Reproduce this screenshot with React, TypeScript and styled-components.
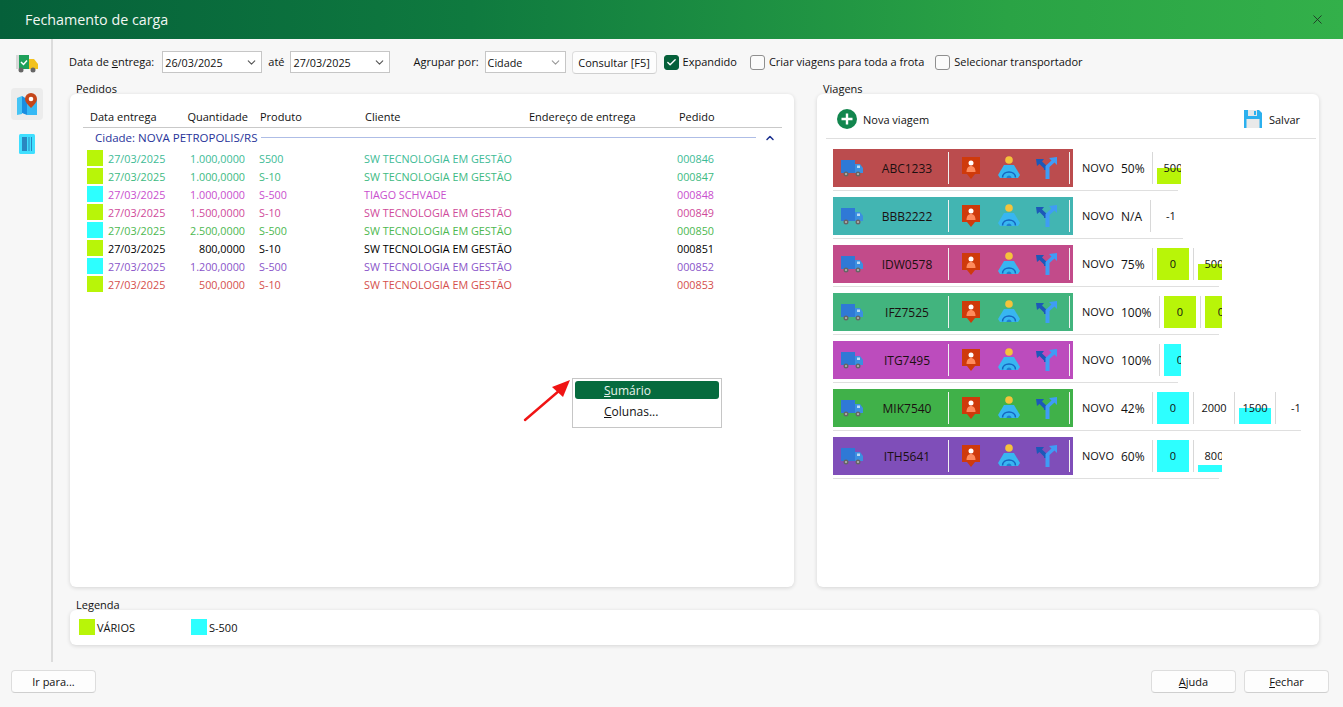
import React from 'react';
import styled, { createGlobalStyle } from 'styled-components';
import { X, ChevronDown, ChevronUp, Check } from 'lucide-react';

const Global = createGlobalStyle`
  html, body { margin: 0; padding: 0; background: #f7f7f7; }
  body { font-family: "Open Sans", "Noto Sans", "Liberation Sans", sans-serif; font-size: 11px; color: #111; }
  * { box-sizing: border-box; }
`;

const Page = styled.div`
  position: relative;
  width: 1343px;
  height: 707px;
  display: flex;
  flex-direction: column;
  overflow: hidden;
  background: #f7f7f7;
`;

const TitleBar = styled.div`
  height: 39px;
  flex: none;
  display: flex;
  align-items: center;
  justify-content: space-between;
  padding: 0 18px 0 25px;
  color: #f2f7f3;
  font-size: 14.3px;
  background: linear-gradient(90deg, #05603a 0%, #0f7a3f 35%, #2aa345 75%, #33b04a 100%);
`;

const Body = styled.div`
  flex: none;
  height: 623px;
  display: flex;
`;

const Sidebar = styled.div`
  width: 53px;
  flex: none;
  border-right: 2px solid #dcdcdc;
  display: flex;
  flex-direction: column;
  align-items: flex-start;
  padding: 9px 0 0 11px;
  gap: 8px;
`;

const SideButton = styled.div<{ $active?: boolean }>`
  width: 32px;
  height: 32px;
  border-radius: 4px;
  display: flex;
  align-items: center;
  justify-content: center;
  background: ${(p) => (p.$active ? '#ececec' : 'transparent')};
`;

const Main = styled.div`
  flex: 1;
  padding: 12px 24px 0 16px;
  display: flex;
  flex-direction: column;
`;

const Toolbar = styled.div`
  height: 22px;
  display: flex;
  align-items: center;
`;

const Label = styled.span<{ $left?: number }>`
  margin-left: ${(p) => p.$left ?? 0}px;
  padding-bottom: 1px;
  white-space: nowrap;
`;

const Select = styled.div<{ $width: number; $left?: number }>`
  width: ${(p) => p.$width}px;
  height: 22px;
  margin-left: ${(p) => p.$left ?? 0}px;
  border: 1px solid #c6c6c6;
  background: #fff;
  display: flex;
  align-items: center;
  justify-content: space-between;
  padding: 0 3px 0 2px;
  font-size: 10.8px;
`;

const Button = styled.div<{ $width: number; $left?: number; $height?: number }>`
  width: ${(p) => p.$width}px;
  height: ${(p) => p.$height ?? 23}px;
  margin-left: ${(p) => p.$left ?? 0}px;
  border: 1px solid #dddddd;
  border-bottom-color: #cfcfcf;
  border-radius: 4px;
  background: #fdfdfd;
  display: flex;
  align-items: center;
  justify-content: center;
`;

const CheckBox = styled.div<{ $checked?: boolean; $left: number }>`
  width: 15px;
  height: 15px;
  margin-left: ${(p) => p.$left}px;
  margin-right: 4px;
  border-radius: 3px;
  border: 1px solid ${(p) => (p.$checked ? '#05603a' : '#8f8f8f')};
  background: ${(p) => (p.$checked ? '#05603a' : '#fbfbfb')};
  display: flex;
  align-items: center;
  justify-content: center;
  color: #fff;
`;

const Panels = styled.div`
  display: grid;
  grid-template-columns: 724px 502px;
  column-gap: 23px;
  margin: 9px 0 0 1px;
`;

const PanelTitle = styled.div`
  height: 12px;
  line-height: 14px;
  padding-left: 6px;
  position: relative;
  z-index: 1;
`;

const Card = styled.div<{ $height: number }>`
  height: ${(p) => p.$height}px;
  background: #fff;
  border-radius: 6px;
  box-shadow: 0 1px 4px rgba(0, 0, 0, 0.14);
`;

const OrdersCard = styled(Card)`
  padding: 0 12px 0 13px;
`;

const TableHead = styled.div`
  height: 34px;
  border-bottom: 1px solid #c9c9c9;
  display: grid;
  grid-template-columns: 94px 64px 117px 164px 150px 1fr;
  align-items: center;
  padding: 12px 0 0 7px;
`;

const HeadCell = styled.span<{ $right?: boolean; $left?: number }>`
  text-align: ${(p) => (p.$right ? 'right' : 'left')};
  padding-left: ${(p) => p.$left ?? 0}px;
  white-space: nowrap;
`;

const GroupRow = styled.div`
  height: 21px;
  display: flex;
  align-items: center;
  padding: 0 0 2px 12px;
  color: #28349a;
  font-size: 11.5px;
`;

const GroupLine = styled.div`
  flex: 1;
  height: 1px;
  margin: 0 8px 0 4px;
  background: #aebde6;
`;

const OrderRow = styled.div<{ $color: string }>`
  height: 18px;
  display: grid;
  grid-template-columns: 16px 84px 58px 119px 164px 149px 1fr;
  align-items: center;
  padding-left: 4px;
  font-size: 10.8px;
  color: ${(p) => p.$color};
`;

const Swatch = styled.div<{ $color: string }>`
  width: 16px;
  height: 16px;
  background: ${(p) => p.$color};
`;

const OrderCell = styled.span<{ $right?: boolean; $left?: number }>`
  text-align: ${(p) => (p.$right ? 'right' : 'left')};
  padding-left: ${(p) => p.$left ?? 0}px;
  white-space: nowrap;
`;

const TripsTop = styled.div`
  height: 45px;
  margin: 0 3px 0 9px;
  border-bottom: 1px solid #dfdfdf;
  display: flex;
  align-items: center;
  justify-content: space-between;
  padding: 6px 16px 0 11px;
`;

const TopAction = styled.div<{ $gap: number }>`
  display: flex;
  align-items: center;
  gap: ${(p) => p.$gap}px;
`;

const TripList = styled.div`
  display: flex;
  flex-direction: column;
  gap: 6px;
  padding: 10px 0 0 16px;
`;

const TripRow = styled.div<{ $line: number }>`
  width: ${(p) => p.$line}px;
  height: 42px;
  border-bottom: 1px solid #dfdfdf;
  display: flex;
  align-items: flex-start;
  white-space: nowrap;
`;

const TripBar = styled.div<{ $color: string }>`
  width: 240px;
  height: 38px;
  flex: none;
  background: ${(p) => p.$color};
  display: flex;
  align-items: center;
  padding-left: 8px;
`;

const Plate = styled.span`
  width: 83px;
  text-align: center;
  margin-left: 2px;
  padding-left: 1px;
  font-size: 12px;
  color: #1b1010;
`;

const BarDivider = styled.div<{ $left: number }>`
  width: 1px;
  height: 32px;
  margin-left: ${(p) => p.$left}px;
  background: #f1f1f1;
`;

const BarIcon = styled.div<{ $left: number }>`
  width: 22px;
  height: 24px;
  margin-left: ${(p) => p.$left}px;
  display: flex;
  align-items: center;
  justify-content: center;
`;

const Status = styled.div`
  height: 38px;
  margin-left: 9px;
  width: 34px;
  flex: none;
  display: flex;
  align-items: center;
  padding-bottom: 1px;
`;

const Percent = styled.div<{ $width: number }>`
  height: 38px;
  width: ${(p) => p.$width}px;
  margin-left: 5px;
  flex: none;
  font-size: 12px;
  display: flex;
  align-items: center;
`;

const Cells = styled.div`
  display: flex;
  height: 38px;
  align-items: center;
`;

const CellSep = styled.div`
  width: 1px;
  height: 32px;
  flex: none;
  background: #d8d8d8;
  margin-right: 4px;
`;

const Cell = styled.div<{ $width: number }>`
  position: relative;
  width: ${(p) => p.$width}px;
  height: 32px;
  flex: none;
  margin-right: 4px;
  overflow: hidden;
  font-size: 11px;
`;

const CellFill = styled.div<{ $color: string; $height: number }>`
  position: absolute;
  left: 0;
  right: 0;
  bottom: 0;
  height: ${(p) => p.$height}px;
  background: ${(p) => p.$color};
`;

const CellText = styled.span`
  position: absolute;
  left: 0;
  top: 8px;
  width: 32px;
  text-align: center;
  line-height: 16px;
`;

const LegendSection = styled.div`
  margin: 11px 0 0 1px;
`;

const LegendCard = styled(Card)`
  display: flex;
  align-items: center;
  padding: 0 0 1px 9px;
`;

const LegendItem = styled.div<{ $width: number }>`
  width: ${(p) => p.$width}px;
  display: flex;
  align-items: center;
  gap: 2px;
`;

const Footer = styled.div`
  flex: 1;
  display: flex;
  align-items: flex-start;
  justify-content: space-between;
  padding: 8px 14px 0 11px;
`;

const FooterRight = styled.div`
  display: flex;
  gap: 8px;
`;

const ContextMenu = styled.div`
  position: absolute;
  left: 572px;
  top: 378px;
  width: 150px;
  height: 50px;
  background: #fff;
  border: 1px solid #c6c6c6;
  padding: 2px;
  display: flex;
  flex-direction: column;
`;

const MenuItem = styled.div<{ $active?: boolean }>`
  height: 18px;
  margin-bottom: 3px;
  border-radius: 3px;
  display: flex;
  align-items: center;
  padding-left: 29px;
  font-size: 12px;
  color: ${(p) => (p.$active ? '#e8f3ec' : '#111')};
  background: ${(p) => (p.$active ? '#066b3e' : 'transparent')};
`;

const Arrow = styled.svg`
  position: absolute;
  left: 520px;
  top: 378px;
`;

const LIME = '#b8f508';
const CYAN = '#2dffff';

const TruckIcon = () => (
  <svg width="22" height="20" viewBox="0 0 22 20">
    <rect x="0" y="2" width="14" height="13" fill="#2f79d6" />
    <path d="M14 6h5l3 4v5h-8z" fill="#3b8fe0" />
    <rect x="16" y="7.500" width="3" height="2.500" fill="#bcdcf5" />
    <circle cx="5" cy="16" r="2.500" fill="#666" />
    <circle cx="17" cy="16" r="2.500" fill="#666" />
    <circle cx="5" cy="16" r="1" fill="#bbb" />
    <circle cx="17" cy="16" r="1" fill="#bbb" />
  </svg>
);

const DriverIcon = () => (
  <svg width="18" height="22" viewBox="0 0 18 22">
    <path d="M0 0h18v17h-5l-4 5-4-5H0z" fill="#cf3a0b" />
    <circle cx="9" cy="6" r="2.500" fill="#fff" />
    <path d="M4.500 15c0-4 2-6 4.500-6s4.500 2 4.500 6z" fill="#ff8a5c" />
  </svg>
);

const PersonIcon = () => (
  <svg width="22" height="24" viewBox="0 0 22 24">
    <circle cx="11" cy="4" r="3.800" fill="#f5c33b" />
    <path d="M6 9h10l6 10-2 3H2l-2-3z" fill="#38b6f1" />
    <path d="M4.500 21.500c0-7.500 13-7.500 13 0" stroke="#1565c0" strokeWidth="1.500" fill="none" />
    <path d="M8.500 22c0-3.500 5-3.500 5 0z" fill="#1f7fd0" />
  </svg>
);

const RouteIcon = () => (
  <svg width="22" height="22" viewBox="0 0 22 22">
    <path d="M0 2h8L6 4.500l6 5.500v3H8v-1.500L3.500 7 1 9z" fill="#1c58b8" />
    <path d="M21 0v8l-2.500-2.500L13.500 10v12h-4V9l6-5.500L13 1z" fill="#3f9cf5" />
  </svg>
);

const SideTruck = () => (
  <svg width="22" height="20" viewBox="0 0 22 20">
    <rect x="0" y="1" width="3" height="14" fill="#d8d8d8" />
    <rect x="3" y="1" width="10" height="14" fill="#1ea05a" />
    <path d="M5 8l2.500 2.500L11 6.500" stroke="#fff" strokeWidth="1.500" fill="none" />
    <path d="M13 5h5l4 5v5h-9z" fill="#f3c21f" />
    <circle cx="5" cy="16" r="2.500" fill="#666" />
    <circle cx="17" cy="16" r="2.500" fill="#666" />
  </svg>
);

const SideMap = () => (
  <svg width="22" height="24" viewBox="0 0 22 24">
    <path d="M1 6l5-2v18l-5 1z" fill="#45c4f5" />
    <path d="M6 4l5 3v16l-5-2z" fill="#1a8ee0" />
    <path d="M11 7l10 0v16H11z" fill="#36b9f5" />
    <path d="M15 1a6 6 0 0 1 6 6c0 3-3 6-6 9-3-3-6-6-6-9a6 6 0 0 1 6-6z" fill="#c5461a" />
    <circle cx="15" cy="7" r="2.300" fill="#fff" />
  </svg>
);

const SideBook = () => (
  <svg width="16" height="20" viewBox="0 0 16 20">
    <rect width="16" height="20" rx="1.500" fill="#3fdfff" />
    <rect x="3" y="3" width="5" height="14" fill="#2a87c0" />
    <rect x="9.500" y="3" width="1" height="14" fill="#2a87c0" />
    <rect x="12" y="3" width="1" height="14" fill="#2a87c0" />
  </svg>
);

const PlusIcon = () => (
  <svg width="20" height="20" viewBox="0 0 20 20">
    <circle cx="10" cy="10" r="10" fill="#12864e" />
    <path d="M10 4.500v11M4.500 10h11" stroke="#fff" strokeWidth="2.400" />
  </svg>
);

const SaveIcon = () => (
  <svg width="18" height="18" viewBox="0 0 18 18">
    <path d="M0 0h15l3 3v15H0z" fill="#2cb0ee" />
    <rect x="4" y="0" width="9" height="6" fill="#e4e8ea" />
    <rect x="10" y="1" width="2" height="4" fill="#2cb0ee" />
    <rect x="2.500" y="9" width="13" height="9" fill="#e9e9e9" />
  </svg>
);

type CellData = { width: number; text?: string; color?: string; fill?: number };

const orders = [
  { color: '#3dbb96', swatch: LIME, qty: '1.000,0000', prod: 'S500', client: 'SW TECNOLOGIA EM GESTÃO', id: '000846' },
  { color: '#3dba82', swatch: LIME, qty: '1.000,0000', prod: 'S-10', client: 'SW TECNOLOGIA EM GESTÃO', id: '000847' },
  { color: '#c94fce', swatch: CYAN, qty: '1.000,0000', prod: 'S-500', client: 'TIAGO SCHVADE', id: '000848' },
  { color: '#cf4a9a', swatch: LIME, qty: '1.500,0000', prod: 'S-10', client: 'SW TECNOLOGIA EM GESTÃO', id: '000849' },
  { color: '#4db84f', swatch: CYAN, qty: '2.500,0000', prod: 'S-500', client: 'SW TECNOLOGIA EM GESTÃO', id: '000850' },
  { color: '#000000', swatch: LIME, qty: '800,0000', prod: 'S-10', client: 'SW TECNOLOGIA EM GESTÃO', id: '000851' },
  { color: '#8a55c9', swatch: CYAN, qty: '1.200,0000', prod: 'S-500', client: 'SW TECNOLOGIA EM GESTÃO', id: '000852' },
  { color: '#d54f4c', swatch: LIME, qty: '500,0000', prod: 'S-10', client: 'SW TECNOLOGIA EM GESTÃO', id: '000853' },
];

const trips: { plate: string; color: string; pct: string; pctWidth: number; line: number; cells: CellData[] }[] = [
  { plate: 'ABC1233', color: '#bb4c4e', pct: '50%', pctWidth: 31, line: 345, cells: [{ width: 24, text: '500', color: LIME, fill: 16 }] },
  { plate: 'BBB2222', color: '#42b5b2', pct: 'N/A', pctWidth: 29, line: 350, cells: [{ width: 32, text: '-1' }] },
  { plate: 'IDW0578', color: '#c24b8a', pct: '75%', pctWidth: 31, line: 386, cells: [{ width: 32, text: '0', color: LIME, fill: 32 }, { width: 24, text: '500', color: LIME, fill: 16 }] },
  { plate: 'IFZ7525', color: '#42b47e', pct: '100%', pctWidth: 38, line: 386, cells: [{ width: 32, text: '0', color: LIME, fill: 32 }, { width: 17, text: '0', color: LIME, fill: 32 }] },
  { plate: 'ITG7495', color: '#bc4cbd', pct: '100%', pctWidth: 38, line: 345, cells: [{ width: 17, text: '0', color: CYAN, fill: 32 }] },
  { plate: 'MIK7540', color: '#40b149', pct: '42%', pctWidth: 31, line: 468, cells: [{ width: 32, text: '0', color: CYAN, fill: 32 }, { width: 32, text: '2000' }, { width: 32, text: '1500', color: CYAN, fill: 16 }, { width: 20, text: '-1' }] },
  { plate: 'ITH5641', color: '#7f4eb9', pct: '60%', pctWidth: 31, line: 386, cells: [{ width: 32, text: '0', color: CYAN, fill: 32 }, { width: 24, text: '800', color: CYAN, fill: 7 }] },
];

export default function App() {
  return (
    <Page>
      <Global />
      <TitleBar>
        <span>Fechamento de carga</span>
        <X size={15} strokeWidth={1.3} color="#1c2a20" />
      </TitleBar>
      <Body>
        <Sidebar>
          <SideButton><SideTruck /></SideButton>
          <SideButton $active><SideMap /></SideButton>
          <SideButton><SideBook /></SideButton>
        </Sidebar>
        <Main>
          <Toolbar>
            <Label>Data de <u>e</u>ntrega:</Label>
            <Select $width={100} $left={8}>26/03/2025<ChevronDown size={13} color="#555" /></Select>
            <Label $left={6}>até</Label>
            <Select $width={100} $left={6}>27/03/2025<ChevronDown size={13} color="#555" /></Select>
            <Label $left={23}>Agrupar por:</Label>
            <Select $width={81} $left={6}>Cidade<ChevronDown size={13} color="#999" /></Select>
            <Button $width={85} $left={6}>Consultar [F5]</Button>
            <CheckBox $checked $left={7}><Check size={11} strokeWidth={3} /></CheckBox>
            <Label>Expandido</Label>
            <CheckBox $left={13} />
            <Label>Criar viagens para toda a frota</Label>
            <CheckBox $left={11} />
            <Label>Selecionar transportador</Label>
          </Toolbar>
          <Panels>
            <div>
              <PanelTitle>Pedidos</PanelTitle>
              <OrdersCard $height={493}>
                <TableHead>
                  <HeadCell>Data entrega</HeadCell>
                  <HeadCell $right>Quantidade</HeadCell>
                  <HeadCell $left={12}>Produto</HeadCell>
                  <HeadCell>Cliente</HeadCell>
                  <HeadCell>Endereço de entrega</HeadCell>
                  <HeadCell>Pedido</HeadCell>
                </TableHead>
                <GroupRow>
                  Cidade: NOVA PETROPOLIS/RS
                  <GroupLine />
                  <ChevronUp size={12} strokeWidth={3} color="#1a2f8f" style={{ marginRight: 6 }} />
                </GroupRow>
                {orders.map((o) => (
                  <OrderRow key={o.id} $color={o.color}>
                    <Swatch $color={o.swatch} />
                    <OrderCell $left={5}>27/03/2025</OrderCell>
                    <OrderCell $right>{o.qty}</OrderCell>
                    <OrderCell $left={14}>{o.prod}</OrderCell>
                    <OrderCell>{o.client}</OrderCell>
                    <span />
                    <OrderCell>{o.id}</OrderCell>
                  </OrderRow>
                ))}
              </OrdersCard>
            </div>
            <div>
              <PanelTitle>Viagens</PanelTitle>
              <Card $height={493}>
                <TripsTop>
                  <TopAction $gap={6}><PlusIcon />Nova viagem</TopAction>
                  <TopAction $gap={7}><SaveIcon />Salvar</TopAction>
                </TripsTop>
                <TripList>
                  {trips.map((t) => (
                    <TripRow key={t.plate} $line={t.line}>
                      <TripBar $color={t.color}>
                        <TruckIcon />
                        <Plate>{t.plate}</Plate>
                        <BarDivider $left={0} />
                        <BarIcon $left={11}><DriverIcon /></BarIcon>
                        <BarIcon $left={16}><PersonIcon /></BarIcon>
                        <BarIcon $left={16}><RouteIcon /></BarIcon>
                        <BarDivider $left={11} />
                      </TripBar>
                      <Status>NOVO</Status>
                      <Percent $width={t.pctWidth}>{t.pct}</Percent>
                      <Cells>
                        {t.cells.map((c, i) => (
                          <React.Fragment key={i}>
                            <CellSep />
                            <Cell $width={c.width}>
                              {c.color && <CellFill $color={c.color} $height={c.fill ?? 32} />}
                              <CellText>{c.text}</CellText>
                            </Cell>
                          </React.Fragment>
                        ))}
                      </Cells>
                    </TripRow>
                  ))}
                </TripList>
              </Card>
            </div>
          </Panels>
          <LegendSection>
            <PanelTitle>Legenda</PanelTitle>
            <LegendCard $height={35}>
              <LegendItem $width={112}><Swatch $color={LIME} />VÁRIOS</LegendItem>
              <LegendItem $width={100}><Swatch $color={CYAN} />S-500</LegendItem>
            </LegendCard>
          </LegendSection>
        </Main>
      </Body>
      <Footer>
        <Button $width={85}>Ir para...</Button>
        <FooterRight>
          <Button $width={85}><span><u>A</u>juda</span></Button>
          <Button $width={85}><span><u>F</u>echar</span></Button>
        </FooterRight>
      </Footer>
      <Arrow width="54" height="46" viewBox="0 0 54 46">
        <path d="M5 42L40 12" stroke="#f01414" strokeWidth="2.400" strokeLinecap="round" />
        <path d="M50 2L43 19L32 9z" fill="#f01414" />
      </Arrow>
      <ContextMenu>
        <MenuItem $active><span><u>S</u>umário</span></MenuItem>
        <MenuItem><span><u>C</u>olunas...</span></MenuItem>
      </ContextMenu>
    </Page>
  );
}
